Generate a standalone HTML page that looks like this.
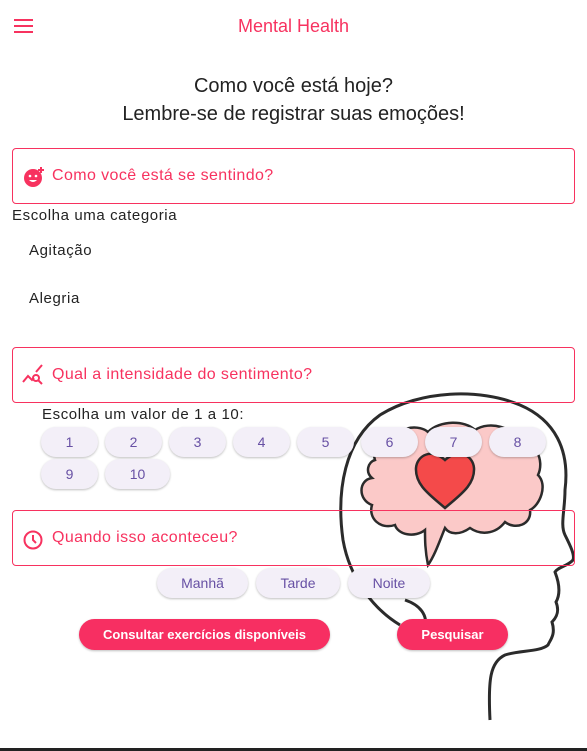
<!DOCTYPE html>
<html><head><meta charset="utf-8"><style>
*{box-sizing:border-box;margin:0;padding:0}
body{width:587px;height:751px;position:relative;background:#fff;font-family:"Liberation Sans",sans-serif;overflow:hidden;color:#222}
.a{position:absolute}
.t{letter-spacing:.6px}
.box{position:absolute;left:12px;width:563px;height:56px;border:1px solid #f7325f;border-radius:4px;z-index:2}
.box span{position:absolute;left:39px;top:18px;font-size:16px;color:#f7325f;letter-spacing:.4px}
.box svg{position:absolute;left:9px;top:16px}
.chip{position:absolute;height:30px;background:#f3eff8;border-radius:15px;box-shadow:0 1px 2px rgba(0,0,0,.25);color:#6750a4;font-size:14px;text-align:center;line-height:30px;z-index:3}
.btn{position:absolute;top:619px;height:31px;background:#f72f62;border-radius:16px;color:#fff;font-size:13px;font-weight:bold;text-align:center;line-height:31px;z-index:3;box-shadow:0 1px 2px rgba(0,0,0,.25)}
</style></head><body>
<svg class="a" style="left:14px;top:18px" width="20" height="16"><g fill="#f7325f"><rect y="1" width="19" height="2"/><rect y="7" width="19" height="2"/><rect y="13" width="19" height="2"/></g></svg>
<div class="a" style="left:0;width:587px;top:16px;text-align:center;font-size:18px;color:#f7325f">Mental Health</div>
<div class="a" style="left:0;width:587px;top:72px;text-align:center;font-size:20px;line-height:28px;color:#222">Como você está hoje?<br>Lembre-se de registrar suas emoções!</div>

<svg class="a" style="left:330px;top:390px;z-index:1" width="257" height="361" viewBox="330 390 257 361">
<path d="M400 625 C375 610 350 580 343 540 C336 490 345 440 380 415 C420 390 480 388 520 405 C555 420 570 450 565 490 C565 510 560 525 565 535 C570 545 575 555 573 560 C568 566 558 567 555 572 C560 585 560 595 556 602 C560 612 556 618 552 622 C556 635 550 640 548 645 C540 652 520 650 505 655 C490 662 488 680 490 720" fill="none" stroke="#2b2b2b" stroke-width="3"/>
<path d="M405 600 C420 605 428 615 425 628" fill="none" stroke="#2b2b2b" stroke-width="3"/>
<path d="M375 460 C370 445 385 435 395 440 C400 425 420 425 428 432 C440 420 465 420 475 430 C490 420 515 428 518 442 C535 440 545 460 538 475 C548 485 540 505 530 510 C532 525 515 530 505 522 C495 535 480 535 470 528 C460 535 450 535 445 528 C440 540 435 555 428 565 C425 550 425 540 425 530 C415 538 398 535 395 525 C380 530 368 518 372 505 C358 500 358 480 372 478 C365 472 368 462 375 460 Z" fill="#fbc9c8" stroke="#2b2b2b" stroke-width="2.5"/>
<path d="M445 508 C430 495 415 485 416 468 C417 455 432 448 445 460 C458 448 473 455 474 468 C475 485 460 495 445 508 Z" fill="#f44a4a" stroke="#2b2b2b" stroke-width="2.5"/>
</svg>

<div class="box" style="top:148px"><svg width="24" height="24" viewBox="0 0 24 24"><circle cx="11" cy="13" r="9" fill="#f7325f"/><circle cx="8" cy="11" r="1.3" fill="#fff"/><circle cx="14" cy="11" r="1.3" fill="#fff"/><path d="M7 15 Q11 19 15 15Z" fill="#fff"/><path d="M19 2v6M16 5h6" stroke="#f7325f" stroke-width="2"/></svg><span>Como você está se sentindo?</span></div>
<div class="a t" style="left:12px;top:207px;font-size:15px">Escolha uma categoria</div>
<div class="a t" style="left:29px;top:242px;font-size:15px">Agitação</div>
<div class="a t" style="left:29px;top:290px;font-size:15px">Alegria</div>

<div class="box" style="top:347px"><svg width="24" height="24" viewBox="0 0 24 24" fill="none" stroke="#f7325f" stroke-width="2"><path d="M1 18l5-6 4 4 2-2"/><path d="M14 8l6-7"/><circle cx="14" cy="14" r="3"/><path d="M16 16l4 4"/></svg><span>Qual a intensidade do sentimento?</span></div>
<div class="a t" style="left:42px;top:406px;font-size:15px;z-index:3">Escolha um valor de 1 a 10:</div>
<div class="chip" style="left:41px;top:427px;width:57px">1</div>
<div class="chip" style="left:105px;top:427px;width:57px">2</div>
<div class="chip" style="left:169px;top:427px;width:57px">3</div>
<div class="chip" style="left:233px;top:427px;width:57px">4</div>
<div class="chip" style="left:297px;top:427px;width:57px">5</div>
<div class="chip" style="left:361px;top:427px;width:57px">6</div>
<div class="chip" style="left:425px;top:427px;width:57px">7</div>
<div class="chip" style="left:489px;top:427px;width:57px">8</div>
<div class="chip" style="left:41px;top:459px;width:57px">9</div>
<div class="chip" style="left:105px;top:459px;width:65px">10</div>

<div class="box" style="top:510px"><svg width="24" height="24" viewBox="0 0 24 24" fill="none" stroke="#f7325f" stroke-width="2"><circle cx="11" cy="13" r="8.5"/><path d="M11 8v5l3 3"/></svg><span>Quando isso aconteceu?</span></div>
<div class="chip" style="left:157px;top:568px;width:91px">Manhã</div>
<div class="chip" style="left:256px;top:568px;width:84px">Tarde</div>
<div class="chip" style="left:348px;top:568px;width:82px">Noite</div>

<div class="btn" style="left:79px;width:251px">Consultar exercícios disponíveis</div>
<div class="btn" style="left:397px;width:111px">Pesquisar</div>
<div class="a" style="left:0;top:748px;width:587px;height:3px;background:#222"></div>
</body></html>
